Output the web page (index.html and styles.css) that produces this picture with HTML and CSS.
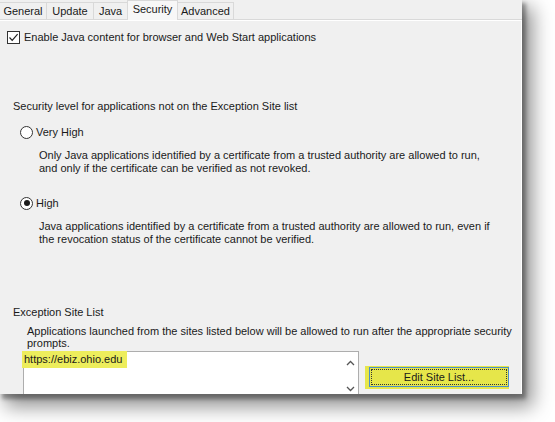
FILE: index.html
```html
<!DOCTYPE html>
<html>
<head>
<meta charset="utf-8">
<link rel="stylesheet" href="styles.css">
</head>
<body>
<div class="window">
  <div class="tabs">
    <div class="tab t-general">General</div>
    <div class="tab t-update">Update</div>
    <div class="tab t-java">Java</div>
    <div class="tab t-security active">Security</div>
    <div class="tab t-advanced">Advanced</div>
  </div>
  <div class="panel">
    <div class="check-row">
      <span class="checkbox">
        <svg width="11" height="11" viewBox="0 0 11 11"><path d="M1.5 5.5 L4.2 8.3 L9.6 2.2" fill="none" stroke="#222" stroke-width="1.2"/></svg>
      </span>
      <span>Enable Java content for browser and Web Start applications</span>
    </div>

    <div class="section-title">Security level for applications not on the Exception Site list</div>

    <div class="radio-row first">
      <span class="radio"></span>
      <span>Very High</span>
    </div>
    <div class="desc">Only Java applications identified by a certificate from a trusted authority are allowed to run,<br>and only if the certificate can be verified as not revoked.</div>

    <div class="radio-row second">
      <span class="radio checked"><span class="dot"></span></span>
      <span>High</span>
    </div>
    <div class="desc">Java applications identified by a certificate from a trusted authority are allowed to run, even if<br>the revocation status of the certificate cannot be verified.</div>

    <div class="section-title exc">Exception Site List</div>
    <div class="exc-desc">Applications launched from the sites listed below will be allowed to run after the appropriate security<br>prompts.</div>

    <div class="site-row">
      <div class="site-list">
        <div class="site-items"><span class="hl">https://ebiz.ohio.edu</span></div>
        <div class="scroll">
          <svg width="9" height="6" viewBox="0 0 9 6"><path d="M1 5 L4.5 1.5 L8 5" fill="none" stroke="#555" stroke-width="1.3"/></svg>
          <svg width="9" height="6" viewBox="0 0 9 6"><path d="M1 1 L4.5 4.5 L8 1" fill="none" stroke="#555" stroke-width="1.3"/></svg>
        </div>
      </div>
      <div class="btn-wrap">
        <button class="btn"><span class="focus">Edit Site List...</span></button>
      </div>
    </div>
  </div>
</div>
</body>
</html>
```

FILE: styles.css
```css
html, body {
  margin: 0;
  padding: 0;
  background: #ffffff;
}
body {
  font-family: "Liberation Sans", Arial, sans-serif;
  font-size: 11px;
  color: #1a1a1a;
  width: 555px;
  height: 422px;
  overflow: hidden;
}
.window {
  width: 522px;
  height: 394px;
  background: #f0f0f0;
  box-shadow: 3px 4px 4px 1px rgba(0, 0, 0, 0.35), 8px 10px 18px 3px rgba(0, 0, 0, 0.42);
  display: flex;
  flex-direction: column;
  overflow: hidden;
}
.tabs {
  display: flex;
  height: 19px;
  align-items: flex-end;
  background: #f0f0f0;
  position: relative;
  z-index: 2;
}
.tab {
  height: 17px;
  line-height: 17px;
  box-sizing: border-box;
  border: 1px solid #d9d9d9;
  border-bottom: none;
  margin-right: -1px;
  background: #f0f0f0;
  text-align: center;
  color: #1a1a1a;
}
.t-general { width: 47px; border-left: none; }
.t-update { width: 48px; }
.t-java { width: 35px; }
.t-security { width: 51px; }
.t-advanced { width: 57px; }
.tab.active {
  height: 20px;
  line-height: 16px;
  background: #f7f7f7;
  margin-bottom: -1px;
  position: relative;
}
.panel {
  flex: 1;
  border-top: 1px solid #d9d9d9;
  box-shadow: inset 0 1px 0 #ffffff, inset -1px 0 0 #ffffff;
  padding-left: 13px;
}
.check-row {
  display: flex;
  align-items: center;
  margin-top: 10px;
  margin-left: -6px;
  height: 14px;
  gap: 4px;
}
.checkbox {
  width: 11px;
  height: 11px;
  border: 1px solid #333;
  background: #fff;
  display: inline-flex;
}
.section-title {
  margin-top: 55px;
  line-height: 14px;
}
.radio-row {
  display: flex;
  align-items: center;
  height: 14px;
  margin-left: 7px;
  gap: 3px;
}
.radio-row.first { margin-top: 12px; }
.radio-row.second { margin-top: 22px; }
.radio {
  width: 11px;
  height: 11px;
  border: 1px solid #333;
  border-radius: 50%;
  background: #fff;
  display: inline-flex;
  align-items: center;
  justify-content: center;
}
.dot {
  width: 6px;
  height: 6px;
  border-radius: 50%;
  background: #1a1a1a;
}
.desc {
  margin-left: 26px;
  margin-top: 10px;
  line-height: 12.5px;
}
.section-title.exc {
  margin-top: 60px;
}
.exc-desc {
  margin-left: 14px;
  margin-top: 6px;
  line-height: 12px;
}
.site-row {
  display: flex;
  align-items: flex-start;
  margin-top: 2px;
  margin-left: 10px;
}
.site-list {
  width: 334px;
  height: 45px;
  border: 1px solid #adadad;
  border-bottom: none;
  background: #fff;
  display: flex;
  justify-content: space-between;
}
.site-items {
  margin-left: -2px;
  margin-top: -1px;
}
.hl {
  display: inline-block;
  background: #eded5c;
  padding: 2px 5px 3px 2px;
  line-height: 12px;
}
.scroll {
  width: 16px;
  display: flex;
  flex-direction: column;
  align-items: center;
  justify-content: space-between;
  padding: 8px 0 3px;
  box-sizing: border-box;
  height: 43px;
}
.btn-wrap {
  margin-left: 6px;
  margin-top: 15px;
  background: #e6e64a;
  padding: 1px 0 2px 4px;
}
.btn {
  display: block;
  width: 140px;
  height: 20px;
  margin: 0;
  padding: 1px;
  border: 1px solid #4a8fc8;
  background: #e6e64a;
  font-family: "Liberation Sans", Arial, sans-serif;
  font-size: 11px;
  color: #1a1a1a;
}
.focus {
  display: flex;
  align-items: center;
  justify-content: center;
  height: 100%;
  box-sizing: border-box;
  border: 1px dotted #333;
}
```
